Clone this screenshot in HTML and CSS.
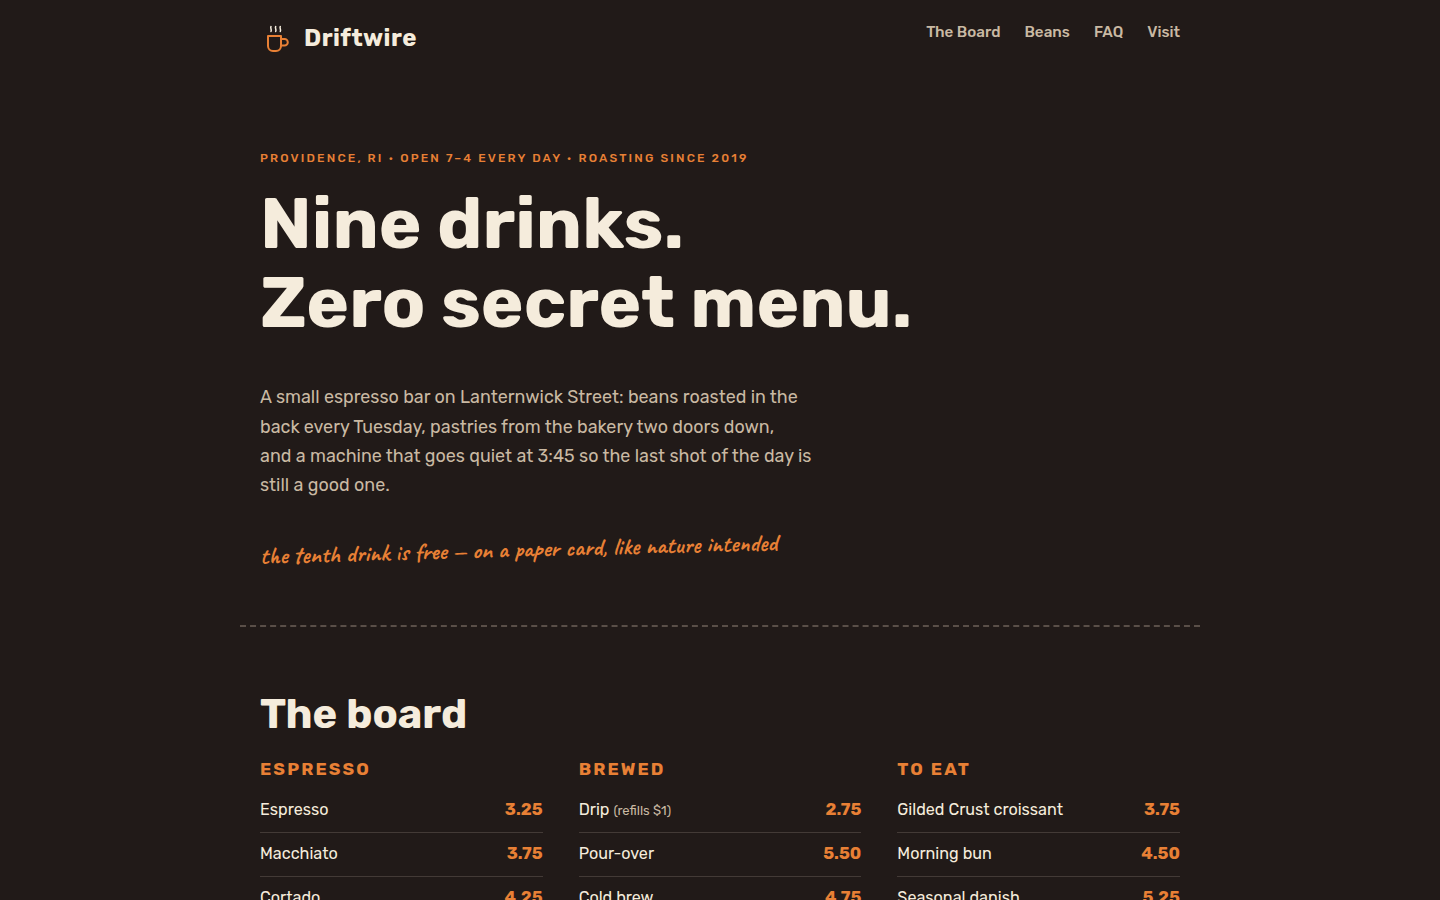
FILE: index.html
```html
<!DOCTYPE html>
<html lang="en">
<head>
<meta charset="utf-8">
<title>Driftwire</title>
<link rel="stylesheet" href="styles.css">
</head>
<body>
<div class="page">
  <header class="top">
    <a class="brand">
      <svg class="cup" viewBox="0 0 28 28" width="28" height="28" fill="none" stroke="#e88035" stroke-width="2" stroke-linecap="round" stroke-linejoin="round">
        <path d="M4 12h13v10a5 5 0 0 1-5 5H9a5 5 0 0 1-5-5z"/>
        <path d="M17 15h3.500a3.300 3.300 0 0 1 0 6.600H17"/>
        <path stroke="#f5ecdc" stroke-width="1.5" d="M7 2.500c-1 1.500 1 3 0 5M11.700 2.500c-1 1.500 1 3 0 5M16.300 2.500c-1 1.500 1 3 0 5"/>
      </svg>
      <span class="brand-name">Driftwire</span>
    </a>
    <nav class="nav">
      <a>The Board</a><a>Beans</a><a>FAQ</a><a>Visit</a>
    </nav>
  </header>
  <section class="hero">
    <p class="eyebrow">PROVIDENCE, RI • OPEN 7–4 EVERY DAY • ROASTING SINCE 2019</p>
    <h1>Nine drinks.<br>Zero secret menu.</h1>
    <p class="lead">A small espresso bar on Lanternwick Street: beans roasted in the<br>back every Tuesday, pastries from the bakery two doors down,<br>and a machine that goes quiet at 3:45 so the last shot of the day is<br>still a good one.</p>
    <p class="note">the tenth drink is free — on a paper card, like nature intended</p>
  </section>
  <section class="board">
    <h2>The board</h2>
    <div class="cols">
      <div>
        <h3>ESPRESSO</h3>
        <div class="row"><span>Espresso</span><b>3.25</b></div>
        <div class="row"><span>Macchiato</span><b>3.75</b></div>
        <div class="row"><span>Cortado</span><b>4.25</b></div>
      </div>
      <div>
        <h3>BREWED</h3>
        <div class="row"><span>Drip <small>(refills $1)</small></span><b>2.75</b></div>
        <div class="row"><span>Pour-over</span><b>5.50</b></div>
        <div class="row"><span>Cold brew</span><b>4.75</b></div>
      </div>
      <div>
        <h3>TO EAT</h3>
        <div class="row"><span>Gilded Crust croissant</span><b>3.75</b></div>
        <div class="row"><span>Morning bun</span><b>4.50</b></div>
        <div class="row"><span>Seasonal danish</span><b>5.25</b></div>
      </div>
    </div>
  </section>
</div>
</body>
</html>
```
FILE: styles.css
```css
* { box-sizing: border-box; }
html, body { margin: 0; height: 100%; }
body { background: #211a18; color: #f5ecdc; font-family: Rubik, Inter, "Noto Sans", sans-serif; height: 900px; overflow: hidden; }
.page { width: 960px; margin: 0 auto; }
.top { display: flex; justify-content: space-between; align-items: flex-start; padding: 24px 20px 0; height: 76px; }
.brand { display: flex; align-items: center; gap: 12px; padding-left: 4px; }
.brand-name { font-size: 24px; font-weight: 700; line-height: 28px; letter-spacing: .45px; }
.nav { display: flex; gap: 24px; font-size: 15.2px; font-weight: 500; color: #c9b9a3; line-height: 16px; }
.hero { padding: 74px 20px 0; height: 551px; border-bottom: 2px dashed #5a4f48; }
.eyebrow { margin: 0; color: #e88035; font-size: 12px; font-weight: 500; letter-spacing: 2.16px; line-height: 16px; }
h1 { margin: 18px 0 0; font-size: 72.1px; line-height: 79.2px; font-weight: 700; }
.lead { margin: 39.8px 0 0; font-size: 17.9px; line-height: 29.33px; color: #c9b9a3; }
.note { margin: 41.2px 0 0; color: #e88035; font-family: Caveat, "DejaVu Serif", serif; font-size: 24.3px; font-weight: 600; transform: rotate(-1.5deg); transform-origin: left center; width: 560px; }
.board { padding: 61px 20px 0; }
h2 { margin: 0; font-size: 41.6px; line-height: 52px; font-weight: 700; }
.cols { display: grid; grid-template-columns: repeat(3, 1fr); gap: 36px; margin-top: 17px; }
h3 { margin: 0 0 8px; color: #e88035; font-size: 17.6px; letter-spacing: 2.11px; font-weight: 700; line-height: 24px; }
.row { display: flex; justify-content: space-between; align-items: baseline; font-size: 16.16px; height: 44px; padding-top: 9px; line-height: 22px; border-bottom: 1px solid #433a36; }
.row b { color: #e88035; font-size: 16.9px; font-weight: 700; }
.row small { font-size: 13.1px; color: #c9b9a3; }
```
